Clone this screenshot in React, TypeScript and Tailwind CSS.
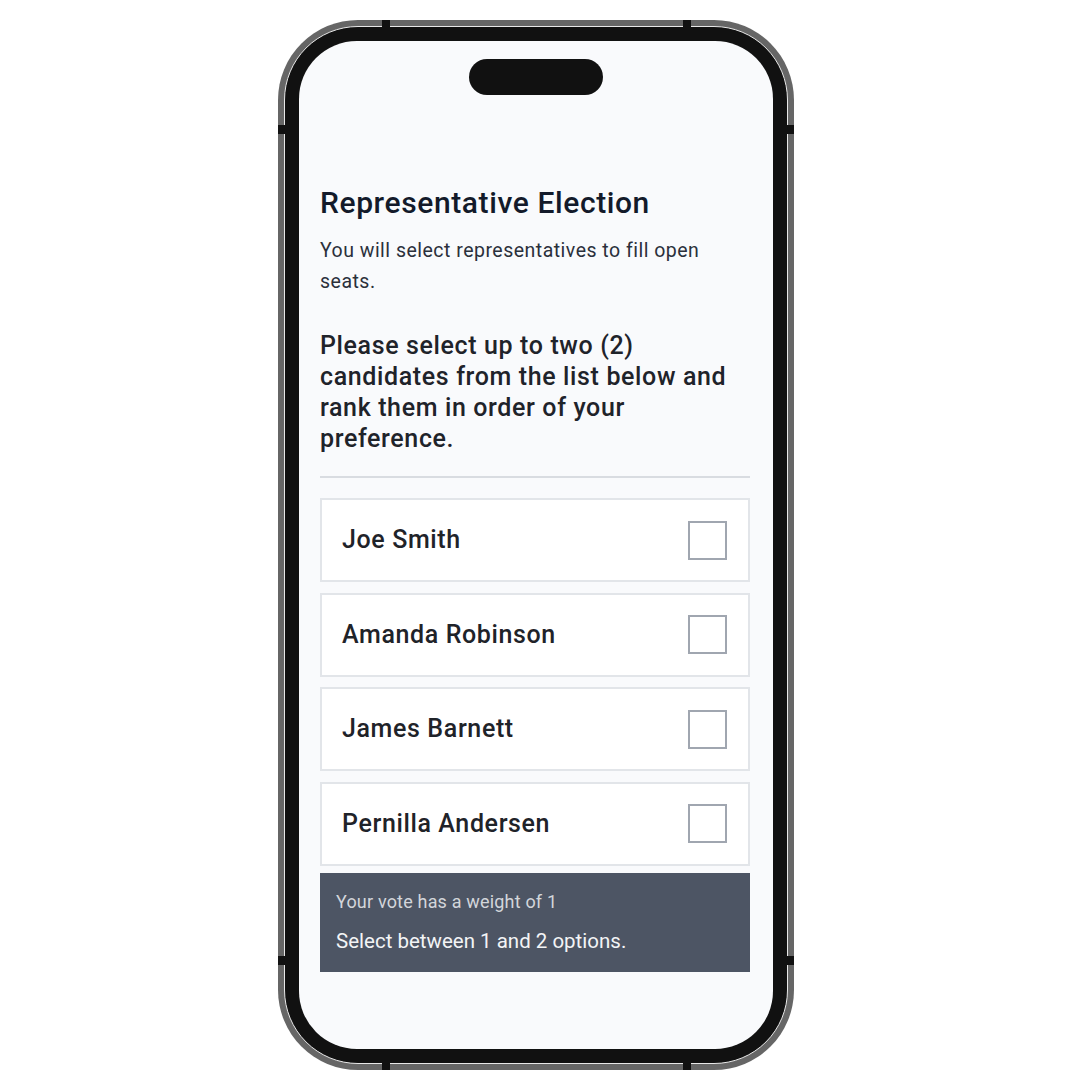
const candidates = ["Joe Smith", "Amanda Robinson", "James Barnett", "Pernilla Andersen"];

function Tick({ className }: { className: string }) {
  return <div className={`absolute bg-[#111111] ${className}`} />;
}

function CandidateRow({ name }: { name: string }) {
  return (
    <label className="flex h-[84px] items-center justify-between border-2 border-[#e2e5e9] bg-white pl-[20px] pr-[21px]">
      <span className="text-[25px] font-medium tracking-[0.025em] text-[#1f2329]">{name}</span>
      <input type="checkbox" className="peer sr-only" />
      <span className="block h-[39px] w-[39px] border-[2.5px] border-[#a0a6b0] bg-white" />
    </label>
  );
}

export default function App() {
  return (
    <div className="flex h-[1090px] w-full items-center justify-center bg-white font-['Roboto',sans-serif]">
      <div className="relative h-[1050px] w-[516px] rounded-[80px] bg-[#666666] p-[6px]">
        <Tick className="left-[104px] top-0 h-[7px] w-[8px]" />
        <Tick className="right-[103px] top-0 h-[7px] w-[8px]" />
        <Tick className="bottom-0 left-[104px] h-[7px] w-[8px]" />
        <Tick className="bottom-0 right-[103px] h-[7px] w-[8px]" />
        <Tick className="left-0 top-[105px] h-[9px] w-[7px]" />
        <Tick className="right-0 top-[105px] h-[9px] w-[7px]" />
        <Tick className="bottom-[105px] left-0 h-[9px] w-[7px]" />
        <Tick className="bottom-[105px] right-0 h-[9px] w-[7px]" />

        <div className="h-full w-full rounded-[74px] border border-[#e8e8e8] bg-[#111111] p-[14px]">
          <div className="flex h-full w-full flex-col overflow-hidden rounded-[58px] bg-[#f9fafc] pt-[18px]">
            <div className="mx-auto h-[36px] w-[134px] shrink-0 rounded-full bg-[#111111]" />

            <div className="flex flex-col pl-[21px] pr-[23px] pt-[90px]">
              <h1 className="text-[30px] font-medium leading-[36px] tracking-[0.02em] text-[#131a2a]">
                Representative Election
              </h1>
              <p className="mt-[14px] text-[19.5px] leading-[31px] tracking-[0.025em] text-[#2b303b]">
                You will select representatives to fill open seats.
              </p>
              <p className="mt-[33px] text-[25px] font-medium leading-[31px] tracking-[0.025em] text-[#1f232a]">
                Please select up to two (2) candidates from the list below and rank them in order of your
                preference.
              </p>

              <div className="mt-[22px] h-[2px] bg-[#d9dce1]" />

              <div className="mt-[20px] flex flex-col gap-[10.5px]">
                {candidates.map((name) => (
                  <CandidateRow key={name} name={name} />
                ))}
              </div>

              <div className="mt-[7px] flex h-[99px] flex-col justify-center gap-[14px] bg-[#4d5564] px-[16px]">
                <span className="text-[18px] leading-[24px] tracking-[0.01em] text-[#d3d6db]">
                  Your vote has a weight of 1
                </span>
                <span className="text-[20.5px] leading-[26px] text-[#f3f4f6]">
                  Select between 1 and 2 options.
                </span>
              </div>
            </div>
          </div>
        </div>
      </div>
    </div>
  );
}
